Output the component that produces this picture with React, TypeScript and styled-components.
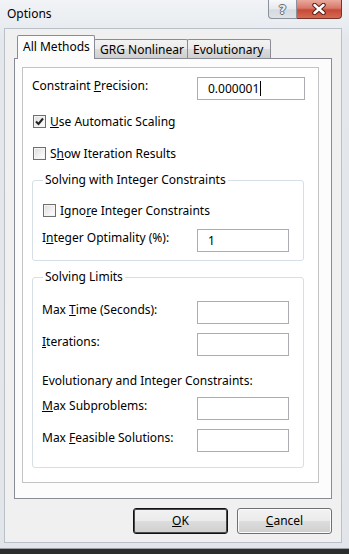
import React from "react";
import styled, { createGlobalStyle, css } from "styled-components";

const Global = createGlobalStyle`
  html, body { margin: 0; padding: 0; background: #3a3a3a; }
  body { font-family: "Noto Sans", "Segoe UI", sans-serif; font-size: 12px; color: #000; }
  * { box-sizing: border-box; }
`;

const Screen = styled.div`
  width: 349px;
  height: 554px;
  background: linear-gradient(#4a4a4a, #2c2c2c);
`;

const Window = styled.div`
  width: 349px;
  height: 549px;
  display: flex;
  flex-direction: column;
  background: linear-gradient(#f1f3f6, #e4e8ed 40px, #e2e6eb);
  border-bottom: 1px solid #9aa1a9;
`;

const TitleBar = styled.div`
  height: 28px;
  display: flex;
  align-items: flex-start;
  padding-left: 7px;
  padding-right: 7px;
`;

const Title = styled.div`
  align-self: center;
  flex: 1;
  font-size: 12px;
  line-height: 16px;
  margin-top: -1px;
`;

const CaptionGroup = styled.div`
  display: flex;
`;

const CaptionButton = styled.div<{ $close?: boolean }>`
  height: 19px;
  display: flex;
  align-items: center;
  justify-content: center;
  border: 1px solid #8a919b;
  border-top: none;
  ${(p) =>
    p.$close
      ? css`
          width: 45px;
          border-color: #7a3328;
          border-left: none;
          border-radius: 0 0 4px 0;
          background: linear-gradient(#e9a99b, #d7786a 45%, #c74a36 55%, #d46a55);
        `
      : css`
          width: 29px;
          border-radius: 0 0 0 4px;
          background: linear-gradient(#f7f8f9, #e6e9ed 50%, #d5dae0 55%, #dfe3e8);
        `}
`;

const HelpGlyph = styled.span`
  font-family: "DejaVu Sans", sans-serif;
  font-weight: 700;
  font-size: 13px;
  line-height: 1;
  color: #eeeeee;
  text-shadow: 1px 0 0 #6a6a6a, -1px 0 0 #6a6a6a, 0 1px 0 #6a6a6a, 0 -1px 0 #6a6a6a;
`;

const Client = styled.div`
  flex: 1;
  margin: 0 7px 5px 4px;
  background: #f0f0f0;
  border: 1px solid #b9c0c8;
  padding: 6px 9px 8px 9px;
  display: flex;
  flex-direction: column;
`;

const TabStrip = styled.div`
  height: 23px;
  display: flex;
  align-items: flex-end;
  padding-left: 3px;
`;

const Tab = styled.div<{ $w: number; $active?: boolean }>`
  width: ${(p) => p.$w}px;
  height: 19px;
  margin-left: -1px;
  border: 1px solid #898c95;
  border-bottom: none;
  border-radius: 2px 2px 0 0;
  padding-left: 5px;
  display: flex;
  align-items: center;
  white-space: nowrap;
  background: linear-gradient(#f3f3f3, #ebebeb 50%, #dddddd 50%, #cfcfcf);
  ${(p) =>
    p.$active &&
    css`
      height: 24px;
      margin-bottom: -1px;
      margin-left: 0;
      padding-left: 5px;
      padding-bottom: 2px;
      background: #fcfcfc;
      position: relative;
      z-index: 1;
    `}
`;

const TabPanel = styled.div`
  flex: 1;
  border: 1px solid #898c95;
  background: #fcfcfc;
  padding: 8px 12px 15px 7px;
  display: flex;
  flex-direction: column;
`;

const Page = styled.div`
  flex: 1;
  border: 1px solid #c3c3c3;
  background: #ffffff;
  padding: 9px 0 0 9px;
  display: flex;
  flex-direction: column;
`;

const FieldRow = styled.div<{ $labelW: number; $inputW: number; $mt?: number }>`
  display: grid;
  grid-template-columns: ${(p) => p.$labelW}px ${(p) => p.$inputW}px;
  align-items: start;
  margin-top: ${(p) => p.$mt ?? 0}px;
`;

const Label = styled.span`
  line-height: 16px;
  padding-top: 1px;
  white-space: nowrap;
`;

const TextBox = styled.div`
  height: 23px;
  border: 1px solid #abadb3;
  background: #fff;
  padding-left: 10px;
  display: flex;
  align-items: center;
  line-height: 16px;
`;

const Caret = styled.span`
  width: 1px;
  height: 15px;
  background: #000;
  margin-left: 1px;
`;

const CheckRow = styled.div<{ $mt: number; $ml: number }>`
  display: flex;
  align-items: center;
  gap: 4px;
  height: 16px;
  margin-top: ${(p) => p.$mt}px;
  margin-left: ${(p) => p.$ml}px;
  white-space: nowrap;
`;

const Box = styled.span`
  width: 13px;
  height: 13px;
  border: 1px solid #6f6f6f;
  background: linear-gradient(135deg, #dcdcdc, #f6f6f6 70%, #ffffff);
  box-shadow: inset 0 0 0 1px #f4f4f4;
  display: flex;
  align-items: center;
  justify-content: center;
  flex: none;
`;

const Group = styled.fieldset<{ $mt: number; $pb: number }>`
  margin: ${(p) => p.$mt}px 0 0 0;
  width: 272px;
  min-width: 0;
  border: 1px solid #d5dfe5;
  border-radius: 3px;
  padding: 0 9px ${(p) => p.$pb}px 9px;
`;

const Legend = styled.legend`
  padding: 0 2px;
  margin-left: 1px;
  line-height: 16px;
  font-size: 12px;
`;

const Note = styled.div<{ $mt: number }>`
  line-height: 16px;
  margin-top: ${(p) => p.$mt}px;
  white-space: nowrap;
`;

const ButtonRow = styled.div`
  display: flex;
  justify-content: flex-end;
  gap: 9px;
  margin-top: 9px;
`;

const Button = styled.div<{ $default?: boolean }>`
  width: 95px;
  height: 26px;
  border: 1px solid #707070;
  border-radius: 3px;
  background: linear-gradient(#f2f2f2, #ebebeb 50%, #dddddd 50%, #cfcfcf);
  box-shadow: inset 0 0 0 1px #fbfbfb;
  display: flex;
  align-items: center;
  justify-content: center;
  line-height: 16px;
  ${(p) =>
    p.$default &&
    css`
      border-color: #111;
      box-shadow: inset 0 0 0 1px #4a4a4a;
    `}
`;

const Check = () => (
  <svg width="9" height="9" viewBox="0 0 9 9">
    <path d="M1 4.5 L3.5 7 L8 1.5" fill="none" stroke="#222" strokeWidth="2" />
  </svg>
);

const CloseX = () => (
  <svg width="16" height="12" viewBox="0 0 16 12">
    <path d="M3.5 2 L12.5 10 M12.5 2 L3.5 10" stroke="#5a1f16" strokeWidth="4.5" strokeLinecap="round" />
    <path d="M3.5 2 L12.5 10 M12.5 2 L3.5 10" stroke="#ffffff" strokeWidth="2.5" strokeLinecap="round" />
  </svg>
);

export default function App() {
  return (
    <Screen>
      <Global />
      <Window>
        <TitleBar>
          <Title>Options</Title>
          <CaptionGroup>
            <CaptionButton>
              <HelpGlyph>?</HelpGlyph>
            </CaptionButton>
            <CaptionButton $close>
              <CloseX />
            </CaptionButton>
          </CaptionGroup>
        </TitleBar>
        <Client>
          <TabStrip>
            <Tab $w={78} $active>All Methods</Tab>
            <Tab $w={94}>GRG Nonlinear</Tab>
            <Tab $w={84}>Evolutionary</Tab>
          </TabStrip>
          <TabPanel>
            <Page>
              <FieldRow $labelW={165} $inputW={108}>
                <Label>
                  Constraint <u>P</u>recision:
                </Label>
                <TextBox>
                  0.000001
                  <Caret />
                </TextBox>
              </FieldRow>
              <CheckRow $mt={13} $ml={1}>
                <Box>
                  <Check />
                </Box>
                <span>
                  <u>U</u>se Automatic Scaling
                </span>
              </CheckRow>
              <CheckRow $mt={16} $ml={1}>
                <Box />
                <span>
                  S<u>h</u>ow Iteration Results
                </span>
              </CheckRow>
              <Group $mt={11} $pb={8}>
                <Legend>Solving with Integer Constraints</Legend>
                <CheckRow $mt={14} $ml={1}>
                  <Box />
                  <span>
                    Igno<u>r</u>e Integer Constraints
                  </span>
                </CheckRow>
                <FieldRow $labelW={155} $inputW={92} $mt={11}>
                  <Label>
                    I<u>n</u>teger Optimality (%):
                  </Label>
                  <TextBox>1</TextBox>
                </FieldRow>
              </Group>
              <Group $mt={8} $pb={15}>
                <Legend>Solving Limits</Legend>
                <FieldRow $labelW={155} $inputW={92} $mt={16}>
                  <Label>
                    Max <u>T</u>ime (Seconds):
                  </Label>
                  <TextBox />
                </FieldRow>
                <FieldRow $labelW={155} $inputW={92} $mt={9}>
                  <Label>
                    <u>I</u>terations:
                  </Label>
                  <TextBox />
                </FieldRow>
                <Note $mt={17}>Evolutionary and Integer Constraints:</Note>
                <FieldRow $labelW={155} $inputW={92} $mt={8}>
                  <Label>
                    <u>M</u>ax Subproblems:
                  </Label>
                  <TextBox />
                </FieldRow>
                <FieldRow $labelW={155} $inputW={92} $mt={9}>
                  <Label>
                    Max <u>F</u>easible Solutions:
                  </Label>
                  <TextBox />
                </FieldRow>
              </Group>
            </Page>
          </TabPanel>
          <ButtonRow>
            <Button $default>
              <span>
                <u>O</u>K
              </span>
            </Button>
            <Button>
              <span>
                <u>C</u>ancel
              </span>
            </Button>
          </ButtonRow>
        </Client>
      </Window>
    </Screen>
  );
}
